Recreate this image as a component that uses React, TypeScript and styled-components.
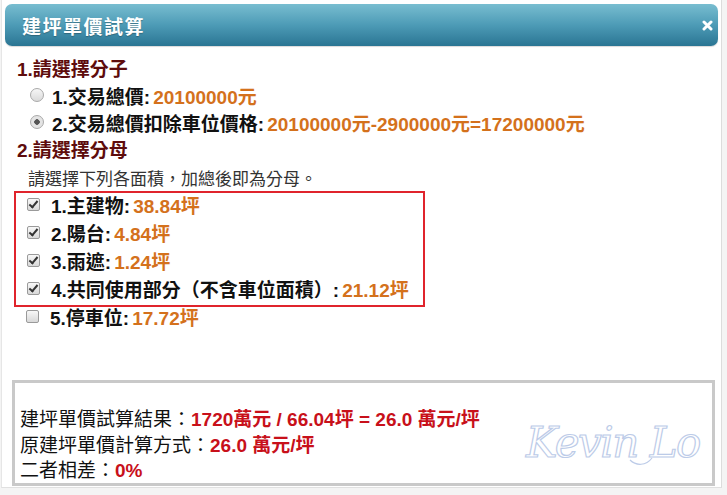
import React from 'react'
import styled, { createGlobalStyle } from 'styled-components'

const GlobalStyle = createGlobalStyle`
    html, body {
        margin: 0;
        padding: 0;
        background: #f4f4f4;
    }
    body {
        font-family: "Liberation Sans", "Noto Sans CJK TC", sans-serif;
    }
`

const numerators = [
    { label: '1.交易總價:', value: '20100000元', checked: false },
    {
        label: '2.交易總價扣除車位價格:',
        value: '20100000元-2900000元=17200000元',
        checked: true,
    },
]

const areas = [
    { label: '1.主建物:', value: '38.84坪' },
    { label: '2.陽台:', value: '4.84坪' },
    { label: '3.雨遮:', value: '1.24坪' },
    { label: '4.共同使用部分（不含車位面積）:', value: '21.12坪' },
]

const App = () => {
    return (
        <>
            <GlobalStyle />
            <Dialog>
                <TitleBar>
                    <Title>建坪單價試算</Title>
                    <CloseButton aria-label='close'>
                        <svg width='11' height='11' viewBox='0 0 11 11'>
                            <path
                                d='M2 2 L9 9 M9 2 L2 9'
                                stroke='#fff'
                                strokeWidth='3'
                                strokeLinecap='round'
                            />
                        </svg>
                    </CloseButton>
                </TitleBar>

                <Content>
                    <Heading>1.請選擇分子</Heading>
                    {numerators.map(n => (
                        <OptionRow key={n.label}>
                            <Radio $checked={n.checked} />
                            <Label>{n.label}</Label>
                            <Value>{n.value}</Value>
                        </OptionRow>
                    ))}

                    <Heading>2.請選擇分母</Heading>
                    <Hint>請選擇下列各面積，加總後即為分母。</Hint>

                    <Highlight>
                        {areas.map(a => (
                            <CheckRow key={a.label}>
                                <Checkbox $checked />
                                <Label>{a.label}</Label>
                                <Value>{a.value}</Value>
                            </CheckRow>
                        ))}
                    </Highlight>
                    <ParkingRow>
                        <Checkbox $checked={false} />
                        <Label>5.停車位:</Label>
                        <Value>17.72坪</Value>
                    </ParkingRow>
                </Content>

                <ResultBox>
                    <ResultLine>
                        建坪單價試算結果：
                        <ResultValue>1720萬元 / 66.04坪 = 26.0 萬元/坪</ResultValue>
                    </ResultLine>
                    <ResultLine>
                        原建坪單價計算方式：
                        <ResultValue>26.0 萬元/坪</ResultValue>
                    </ResultLine>
                    <ResultLine>
                        二者相差：
                        <ResultValue>0%</ResultValue>
                    </ResultLine>
                    <Watermark viewBox='0 0 184 56' width='184' height='56'>
                        <text
                            x='2'
                            y='40'
                            fontFamily='"DejaVu Serif", serif'
                            fontStyle='italic'
                            fontSize='42'
                            fill='#fff'
                            stroke='#bccbe8'
                            strokeWidth='1.2'
                            letterSpacing='-1.5'>
                            Kevin Lo
                        </text>
                        <path
                            d='M106 43 C 112 49, 122 49, 128 41'
                            fill='none'
                            stroke='#bccbe8'
                            strokeWidth='1.2'
                        />
                    </Watermark>
                </ResultBox>
            </Dialog>
        </>
    )
}

export default App

const Dialog = styled.div`
    width: 721px;
    height: 488px;
    margin-left: 1px;
    padding: 4px 3px 0 3px;
    box-sizing: border-box;
    background: #fff;
    border-left: 1px solid #e6e6e6;
    border-right: 1px solid #dcdcdc;
    border-bottom: 1px solid #e0e0e0;
    position: relative;
`

const TitleBar = styled.div`
    display: flex;
    align-items: center;
    justify-content: space-between;
    height: 42px;
    padding: 0 4px 0 17px;
    border-radius: 7px;
    background: linear-gradient(to bottom, #78bdd0 0%, #4d9bb6 50%, #2a7593 100%);
    box-shadow: 0 1px 1px rgba(0, 0, 0, 0.15);
`

const Title = styled.div`
    color: #fff;
    font-size: 19px;
    font-weight: 700;
    letter-spacing: 1.5px;
    text-shadow: 0 1px 1px rgba(0, 0, 0, 0.25);
`

const CloseButton = styled.div`
    display: flex;
    align-items: center;
    justify-content: center;
    width: 14px;
    height: 14px;
`

const Content = styled.div`
    display: flex;
    flex-direction: column;
    align-items: flex-start;
    padding: 9px 0 0 10px;
`

const Heading = styled.div`
    padding: 2px 0 0 2px;
    line-height: 25px;
    font-size: 19px;
    font-weight: 700;
    color: #5e0c0c;
`

const OptionRow = styled.div`
    display: flex;
    align-items: center;
    height: 27px;
    padding-left: 15px;
    padding-bottom: 1px;
    box-sizing: border-box;
    font-size: 19px;
`

const Radio = styled.span<{ $checked: boolean }>`
    width: 12px;
    height: 12px;
    border-radius: 50%;
    border: 1px solid #a9a9a9;
    background: ${p =>
        p.$checked
            ? 'radial-gradient(circle, #555 0 2.5px, #e4e4e4 3px)'
            : 'linear-gradient(#f6f6f6, #dadada)'};
    margin-right: 8px;
    flex: none;
`

const Label = styled.span`
    font-weight: 700;
    color: #111;
`

const Value = styled.span`
    font-weight: 700;
    color: #d4711c;
    margin-left: 3px;
`

const Hint = styled.div`
    padding: 6px 0 0 13px;
    line-height: 22px;
    font-size: 17px;
    color: #333;
`

const Highlight = styled.div`
    display: flex;
    flex-direction: column;
    width: 411px;
    margin-left: -1px;
    border: 2px solid #e0242c;
    box-sizing: border-box;
`

const CheckRow = styled.div`
    display: flex;
    align-items: center;
    height: 28px;
    padding-left: 11px;
    padding-bottom: 6px;
    box-sizing: border-box;
    font-size: 19px;
`

const ParkingRow = styled(CheckRow)`
    margin-top: -2px;
`

const Checkbox = styled.span<{ $checked: boolean }>`
    position: relative;
    width: 11px;
    height: 11px;
    border: 1px solid #9a9a9a;
    border-radius: 2px;
    background: linear-gradient(#f8f8f8, #d8d8d8);
    margin-right: 11px;
    flex: none;

    &::after {
        content: '';
        display: ${p => (p.$checked ? 'block' : 'none')};
        position: absolute;
        left: 3px;
        top: 0px;
        width: 3px;
        height: 7px;
        border: solid #333;
        border-width: 0 2px 2px 0;
        transform: rotate(40deg);
    }
`

const ResultBox = styled.div`
    position: absolute;
    left: 10px;
    right: 6px;
    top: 380px;
    height: 106px;
    box-sizing: border-box;
    border: 3px solid #c9c9c9;
    padding: 24px 0 0 5px;
`

const ResultLine = styled.div`
    line-height: 25.5px;
    font-size: 19px;
    color: #111;
    white-space: nowrap;
`

const ResultValue = styled.span`
    font-weight: 700;
    color: #c8101a;
`

const Watermark = styled.svg`
    position: absolute;
    right: 4px;
    top: 34px;
`
